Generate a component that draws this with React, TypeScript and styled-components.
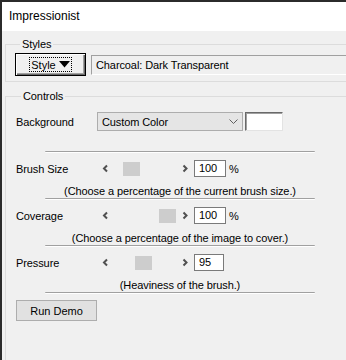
import styled, { createGlobalStyle } from 'styled-components'

const GlobalStyle = createGlobalStyle`
  html, body {
    margin: 0;
    padding: 0;
    background: #f0f0f0;
  }
  body {
    font-family: "Liberation Sans", Arial, sans-serif;
    font-size: 11px;
    letter-spacing: -0.1px;
    color: #000;
  }
`

interface SliderSetting {
  label: string
  value: string
  offset: number
  boxWidth: number
  unit?: string
  hint: string
}

const settings: SliderSetting[] = [
  { label: 'Brush Size', value: '100', offset: 9, boxWidth: 32, unit: '%', hint: '(Choose a percentage of the current brush size.)' },
  { label: 'Coverage', value: '100', offset: 45, boxWidth: 32, unit: '%', hint: '(Choose a percentage of the image to cover.)' },
  { label: 'Pressure', value: '95', offset: 21, boxWidth: 30, hint: '(Heaviness of the brush.)' }
]

const Window = styled.div`
  width: 346px;
  height: 360px;
  box-sizing: border-box;
  overflow: hidden;
  border-top: 2px solid #2b2b2b;
  border-left: 2px solid #2b2b2b;
  background: #f0f0f0;
`

const TitleBar = styled.div`
  height: 29px;
  line-height: 29px;
  padding-left: 7px;
  background: #fff;
  font-size: 12px;
  letter-spacing: 0;
  color: #000;
`

const Body = styled.div`
  padding: 7px 0 0 3px;
`

const Group = styled.fieldset`
  margin: 0;
  width: 380px;
  min-width: 0;
  box-sizing: border-box;
  border: 1px solid #dcdcdc;
  padding: 2px 0 5px 9px;
  & + & {
    margin-top: 8px;
    padding: 9px 0 0 10px;
    min-height: 300px;
  }
`

const Legend = styled.legend`
  margin-left: 5px;
  padding: 0 2px;
  line-height: 13px;
`

const Row = styled.div`
  display: flex;
  align-items: center;
`

const StyleButton = styled.button`
  width: 71px;
  height: 23px;
  padding: 0;
  display: flex;
  align-items: center;
  justify-content: center;
  background: #f0f0f0;
  border: 1px solid #000;
  box-shadow: inset 1px 1px #fff, inset -1px -1px #696969, inset -2px -2px #a0a0a0;
  font: inherit;
  color: #000;
`

const FocusRect = styled.span`
  display: flex;
  align-items: center;
  gap: 3px;
  padding: 0 1px;
  height: 13px;
  outline: 1px dotted #000;
`

const ReadField = styled.div`
  margin-left: 5px;
  flex: 1;
  height: 20px;
  line-height: 18px;
  box-sizing: border-box;
  padding-left: 4px;
  border: 1px solid;
  border-color: #a0a0a0 #fff #fff #a0a0a0;
  background: #f0f0f0;
`

const Label = styled.div`
  width: 81px;
  flex: none;
`

const Select = styled.div`
  width: 146px;
  height: 19px;
  box-sizing: border-box;
  display: flex;
  align-items: center;
  justify-content: space-between;
  padding: 0 4px;
  background: #e5e5e5;
  border: 1px solid #adadad;
`

const ColorBox = styled.div`
  margin-left: 2px;
  width: 38px;
  height: 19px;
  box-sizing: border-box;
  background: #fff;
  border: 1px solid;
  border-color: #696969 #e3e3e3 #e3e3e3 #696969;
  box-shadow: inset 1px 1px #a0a0a0;
`

const Divider = styled.div<{ $top: number }>`
  margin: ${p => p.$top}px 0 0 29px;
  width: 270px;
  height: 2px;
  box-sizing: border-box;
  border-top: 1px solid #a0a0a0;
  border-bottom: 1px solid #fff;
  border-radius: 1px;
`

const SliderRow = styled(Row)`
  margin-top: 7px;
  height: 17px;
`

const ScrollBar = styled.div`
  width: 96px;
  height: 17px;
  display: flex;
  background: #f0f0f0;
`

const Arrow = styled.div`
  width: 17px;
  height: 17px;
  flex: none;
  display: flex;
  align-items: center;
  justify-content: center;
`

const Track = styled.div`
  flex: 1;
  display: flex;
  align-items: center;
`

const Thumb = styled.div<{ $offset: number }>`
  margin-left: ${p => p.$offset}px;
  width: 17px;
  height: 14px;
  background: #cdcdcd;
`

const ValueBox = styled.div<{ $width: number }>`
  margin-left: 1px;
  width: ${p => p.$width}px;
  height: 17px;
  box-sizing: border-box;
  line-height: 15px;
  padding-left: 4px;
  background: #fff;
  border: 1px solid #7a7a7a;
`

const Unit = styled.span`
  margin-left: 3px;
`

const Hint = styled.div`
  margin: 8px 0 0 29px;
  width: 270px;
  text-align: center;
  line-height: 13px;
`

const RunButton = styled.button`
  margin-top: 6px;
  width: 81px;
  height: 21px;
  padding: 0;
  background: #e1e1e1;
  border: 1px solid #adadad;
  font: inherit;
  color: #000;
`

function Chevron({ dir }: { dir: 'left' | 'right' }) {
  const points = dir === 'left' ? '10,5.5 7,8.5 10,11.5' : '7.5,5.5 10.5,8.5 7.5,11.5'
  return (
    <svg width="17" height="17" viewBox="0 0 17 17">
      <polyline points={points} fill="none" stroke="#505050" strokeWidth="2" />
    </svg>
  )
}

export default function App() {
  return (
    <>
      <GlobalStyle />
      <Window>
        <TitleBar>Impressionist</TitleBar>
        <Body>
          <Group>
            <Legend>Styles</Legend>
            <Row>
              <StyleButton>
                <FocusRect>
                  Style
                  <svg width="11" height="7" viewBox="0 0 11 7">
                    <polygon points="0,0 11,0 5.5,6.5" fill="#000" />
                  </svg>
                </FocusRect>
              </StyleButton>
              <ReadField>Charcoal: Dark Transparent</ReadField>
            </Row>
          </Group>
          <Group>
            <Legend>Controls</Legend>
            <Row>
              <Label>Background</Label>
              <Select>
                Custom Color
                <svg width="9" height="6" viewBox="0 0 9 6">
                  <polyline points="0.5,0.5 4.5,4.5 8.5,0.5" fill="none" stroke="#606060" strokeWidth="1" />
                </svg>
              </Select>
              <ColorBox />
            </Row>
            <Divider $top={20} />
            {settings.map(s => (
              <div key={s.label}>
                <SliderRow>
                  <Label>{s.label}</Label>
                  <ScrollBar>
                    <Arrow><Chevron dir="left" /></Arrow>
                    <Track><Thumb $offset={s.offset} /></Track>
                    <Arrow><Chevron dir="right" /></Arrow>
                  </ScrollBar>
                  <ValueBox $width={s.boxWidth}>{s.value}</ValueBox>
                  {s.unit && <Unit>{s.unit}</Unit>}
                </SliderRow>
                <Hint>{s.hint}</Hint>
                <Divider $top={0} />
              </div>
            ))}
            <RunButton>Run Demo</RunButton>
          </Group>
        </Body>
      </Window>
    </>
  )
}
